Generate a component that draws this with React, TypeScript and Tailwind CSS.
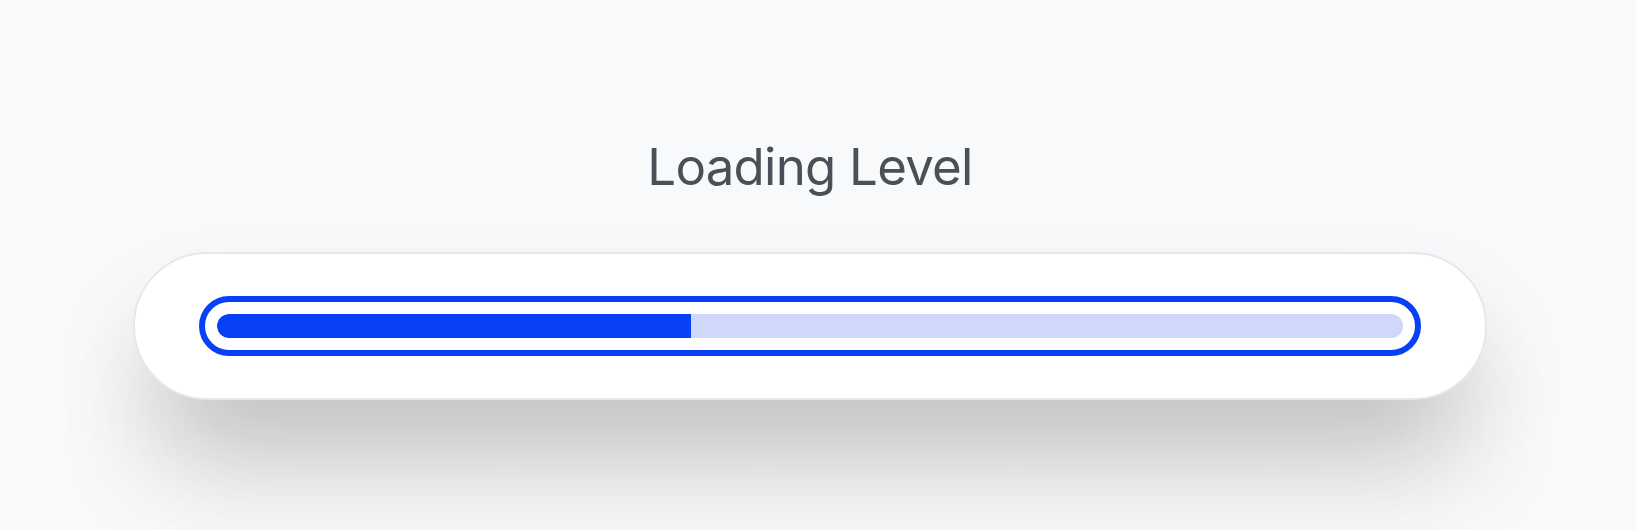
import React from 'react';

const LEVEL = 40;

export default function App() {
  return (
    <div className="min-h-[530px] w-full overflow-hidden bg-[#f8f9fa] pr-4 font-['Inter',sans-serif]">
      <div className="flex flex-col items-center pt-[132px]">
        <h1 className="text-[51px] leading-[70px] font-normal tracking-[-0.015em] text-[#4b5058]">
          Loading Level
        </h1>
        <div className="mt-[50px] w-[1354px] rounded-full border-2 border-[#e6e7ea] bg-white px-16 py-[42px] shadow-[0_55px_100px_-20px_rgba(0,0,0,0.22),0_100px_120px_-10px_rgba(0,0,0,0.07)]">
          <div className="rounded-full border-[6px] border-[#0740f5] bg-white p-3">
            <div className="h-6 w-full overflow-hidden rounded-full bg-[#cfd8fa]">
              <div className="h-full rounded-l-full bg-[#0740f5]" style={{ width: `${LEVEL}%` }} />
            </div>
          </div>
        </div>
      </div>
    </div>
  );
}
